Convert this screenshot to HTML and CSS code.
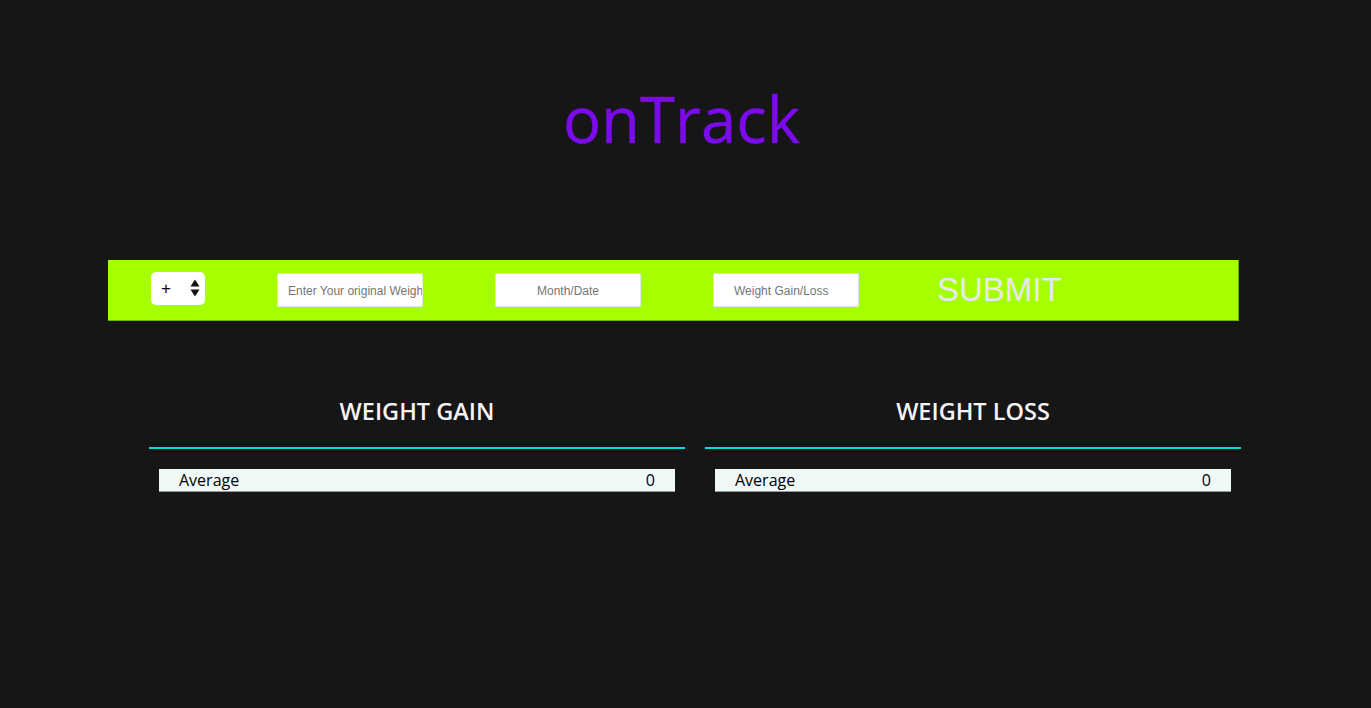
FILE: index.html
```html
<!DOCTYPE html>
<html lang="en">
<head>
<meta charset="utf-8">
<title>onTrack</title>
<link rel="stylesheet" href="styles.css">
</head>
<body>
<h1 class="title">onTrack</h1>
<form class="entry-bar">
  <div class="sign-select">
    <select class="sign">
      <option>+</option>
      <option>-</option>
    </select>
    <svg class="sign-arrows" width="10" height="18" viewBox="0 0 10 18" aria-hidden="true">
      <path d="M5 0.5 L9.5 7.5 L0.5 7.5 Z" fill="#111"/>
      <path d="M5 17.5 L9.5 10.5 L0.5 10.5 Z" fill="#111"/>
    </svg>
  </div>
  <input class="field field-left" type="text" placeholder="Enter Your original Weight">
  <input class="field field-center" type="text" placeholder="Month/Date">
  <input class="field field-offset" type="text" placeholder="Weight Gain/Loss">
  <button class="submit" type="button">SUBMIT</button>
</form>
<main class="columns">
  <section class="column">
    <h2 class="column-title">WEIGHT GAIN</h2>
    <div class="row"><span>Average</span><span>0</span></div>
  </section>
  <section class="column">
    <h2 class="column-title">WEIGHT LOSS</h2>
    <div class="row"><span>Average</span><span>0</span></div>
  </section>
</main>
</body>
</html>
```
FILE: styles.css
```css
* { box-sizing: border-box; }
html, body { margin: 0; padding: 0; }
body {
  background: #161616;
  font-family: "Open Sans", "Liberation Sans", sans-serif;
  width: 1371px;
  height: 708px;
  overflow: hidden;
}
.title {
  margin: 80px 8px 0 0;
  text-align: center;
  font-family: "Open Sans", sans-serif;
  font-weight: 400;
  font-size: 63.5px;
  line-height: 77px;
  color: #7b0bea;
  -webkit-text-stroke: 0.4px #7b0bea;
}
.entry-bar {
  margin: 103px 0 0 108px;
  width: 1131px;
  height: 61px;
  background: #a6ff00;
  border-right: 1px solid #6fb400;
  border-bottom: 1px solid #6fb400;
  display: flex;
  align-items: center;
  padding-left: 43px;
}
.sign-select {
  position: relative;
  width: 54px;
  height: 33px;
  margin-top: -3px;
}
.sign {
  appearance: none;
  -webkit-appearance: none;
  width: 100%;
  height: 100%;
  border: none;
  border-radius: 5px;
  background: #fff;
  font-family: "Liberation Sans", Arial, sans-serif;
  font-size: 17px;
  color: #000;
  padding: 0 0 0 10px;
  outline: none;
}
.sign-arrows {
  position: absolute;
  right: 5px;
  top: 7px;
  pointer-events: none;
}
.field {
  width: 146px;
  height: 34px;
  margin-left: 72px;
  border: 1px solid #e4e4e4;
  border-radius: 2px;
  background: #fff;
  font-family: "Liberation Sans", Arial, sans-serif;
  font-size: 12px;
  color: #333;
  outline: none;
}
.field::placeholder { color: #757575; }
.field-left { padding: 2px 0 0 10px; }
.field-center { text-align: center; padding-top: 2px; }
.field-offset { text-align: left; padding: 2px 0 0 20px; }
.submit {
  margin-left: 72px;
  padding: 0 6px;
  border: none;
  background: transparent;
  font-family: "Liberation Sans", Arial, sans-serif;
  font-size: 33px;
  line-height: 38px;
  color: #e8e8f0;
  cursor: pointer;
}
.columns {
  margin: 74px 0 0 149px;
  width: 1092px;
  display: grid;
  grid-template-columns: 536px 536px;
  column-gap: 20px;
}
.column-title {
  margin: 0;
  padding-bottom: 19px;
  border-bottom: 2px solid #00dde6;
  text-align: center;
  font-family: "Open Sans", sans-serif;
  font-weight: 600;
  font-size: 23.5px;
  line-height: 33px;
  color: #f4f4f8;
}
.row {
  margin: 20px 10px 0 10px;
  height: 23px;
  background: #f0f8f8;
  border-bottom: 1px solid #9a9a9a;
  display: flex;
  justify-content: space-between;
  padding: 0 20px;
  font-family: "Open Sans", sans-serif;
  font-size: 16px;
  line-height: 22px;
  color: #000;
}
```
